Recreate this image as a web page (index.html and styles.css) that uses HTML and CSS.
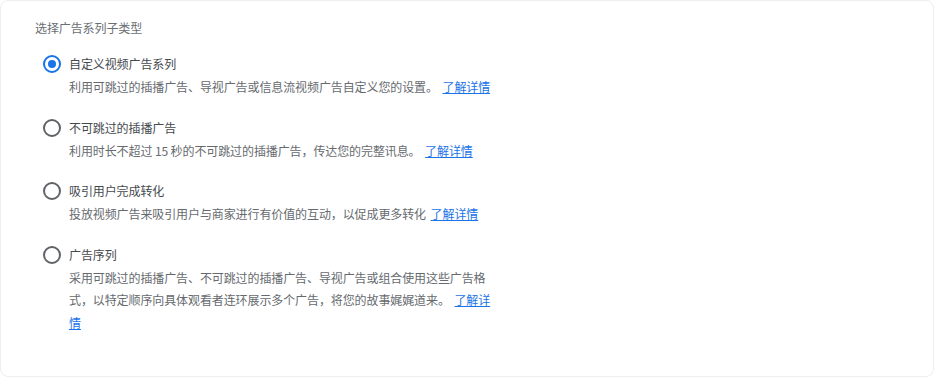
FILE: index.html
```html
<!DOCTYPE html>
<html lang="zh-CN">
<head>
<meta charset="utf-8">
<title>选择广告系列子类型</title>
<link rel="stylesheet" href="styles.css">
</head>
<body>
<div class="card">
  <div class="title">选择广告系列子类型</div>
  <div class="options">
    <div class="option">
      <span class="radio checked"><span class="dot"></span></span>
      <div class="body">
        <div class="label">自定义视频广告系列</div>
        <div class="desc">利用可跳过的插播广告、导视广告或信息流视频广告自定义您的设置。 <a href="#" class="link">了解详情</a></div>
      </div>
    </div>
    <div class="option">
      <span class="radio"></span>
      <div class="body">
        <div class="label">不可跳过的插播广告</div>
        <div class="desc">利用时长不超过 15 秒的不可跳过的插播广告，传达您的完整讯息。 <a href="#" class="link">了解详情</a></div>
      </div>
    </div>
    <div class="option">
      <span class="radio"></span>
      <div class="body">
        <div class="label">吸引用户完成转化</div>
        <div class="desc">投放视频广告来吸引用户与商家进行有价值的互动，以促成更多转化 <a href="#" class="link">了解详情</a></div>
      </div>
    </div>
    <div class="option">
      <span class="radio"></span>
      <div class="body">
        <div class="label">广告序列</div>
        <div class="desc">采用可跳过的插播广告、不可跳过的插播广告、导视广告或组合使用这些广告格式，以特定顺序向具体观看者连环展示多个广告，将您的故事娓娓道来。 <a href="#" class="link">了解详情</a></div>
      </div>
    </div>
  </div>
</div>
</body>
</html>
```
FILE: styles.css
```css
html, body {
  margin: 0;
  padding: 0;
  background: #ffffff;
}
body {
  font-family: "Noto Sans CJK SC", "Liberation Sans", sans-serif;
  font-size: 12px;
  color: #666a6e;
}
.card {
  box-sizing: border-box;
  width: 934px;
  height: 377px;
  border: 1px solid #eeeeee;
  border-radius: 8px;
  background: #ffffff;
  padding: 19px 0 0 34px;
}
.title {
  line-height: 16px;
  font-size: 12px;
  letter-spacing: -0.1px;
  color: #6a6e72;
}
.options {
  display: flex;
  flex-direction: column;
  gap: 19px;
  margin-top: 18px;
}
.option {
  display: flex;
  align-items: flex-start;
  gap: 8px;
  padding-left: 8px;
}
.radio {
  box-sizing: border-box;
  flex: none;
  width: 18px;
  height: 18px;
  margin-top: 1px;
  border: 2px solid #606468;
  border-radius: 50%;
  display: flex;
  align-items: center;
  justify-content: center;
}
.radio.checked {
  border-color: #1a73e8;
}
.dot {
  width: 8px;
  height: 8px;
  border-radius: 50%;
  background: #1a73e8;
}
.body {
  display: flex;
  flex-direction: column;
  gap: 2px;
}
.label {
  line-height: 20px;
  font-size: 12px;
  letter-spacing: -0.1px;
  color: #45494d;
}
.desc {
  width: 429px;
  line-height: 22.5px;
  font-size: 12px;
  letter-spacing: -0.1px;
  color: #666a6e;
}
.link {
  margin-left: 2px;
  color: #1a73e8;
  text-decoration: underline;
}
```
